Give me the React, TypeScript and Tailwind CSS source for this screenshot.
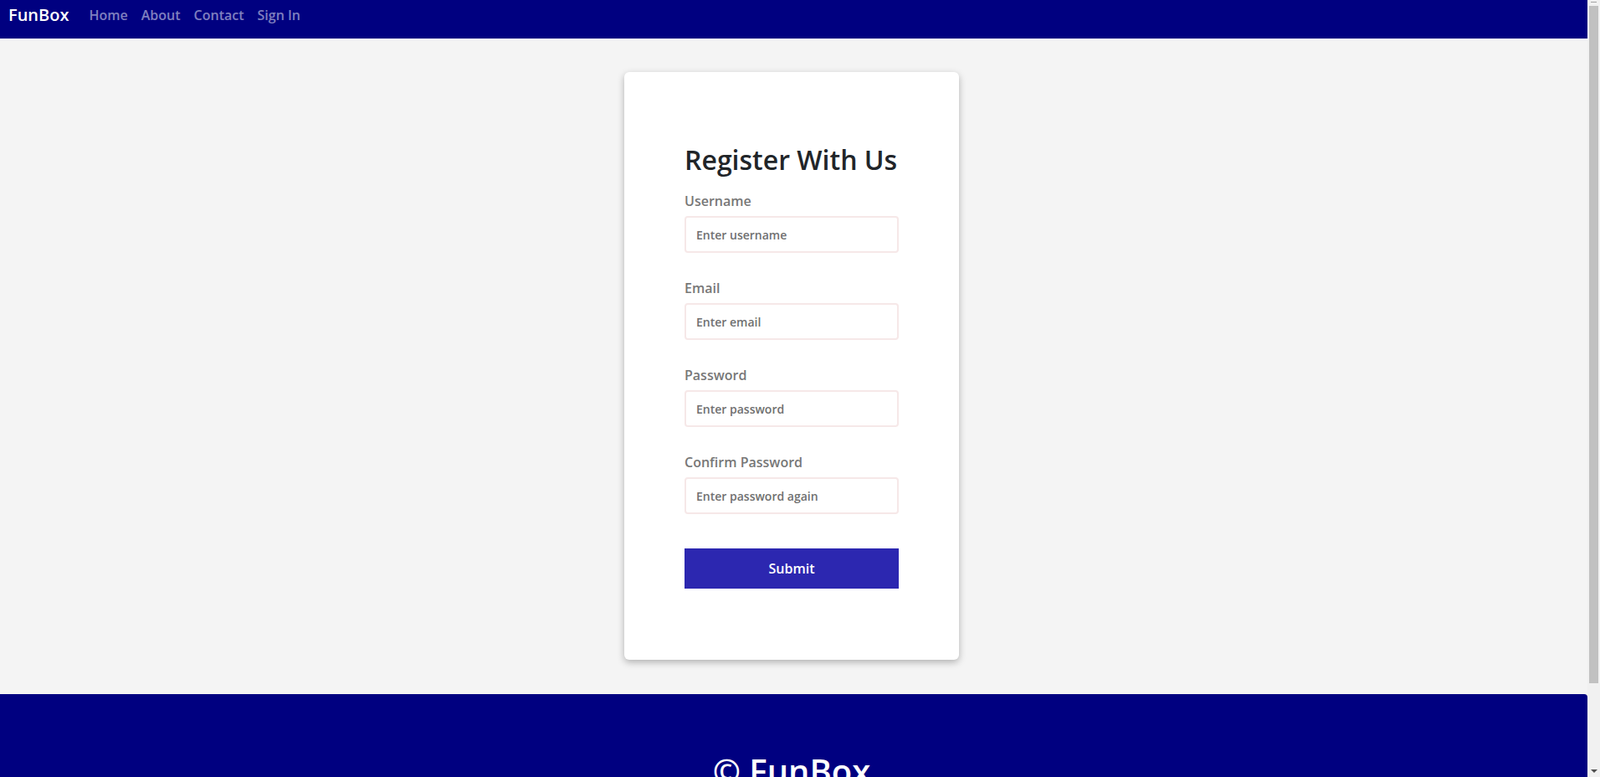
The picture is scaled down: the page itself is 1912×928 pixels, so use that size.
import { useState } from 'react';

const fields = [
  { id: 'username', label: 'Username', placeholder: 'Enter username', type: 'text' },
  { id: 'email', label: 'Email', placeholder: 'Enter email', type: 'email' },
  { id: 'password', label: 'Password', placeholder: 'Enter password', type: 'password' },
  { id: 'confirm', label: 'Confirm Password', placeholder: 'Enter password again', type: 'password' },
];

function FakeScrollbar() {
  // the reference was taken with the window scrollbar showing
  return (
    <div className="sticky top-0 h-screen w-[15px] shrink-0 bg-[#f1f1f1] flex flex-col items-center">
      <div className="h-[7px] w-full flex items-start justify-center">
        <div className="mt-[2px] w-[7px] h-[1px] bg-[#a3a3a3]" />
      </div>
      <div className="w-[11px] h-[809px] bg-[#c1c1c1]" />
      <div className="flex-1 w-full flex items-end justify-center pb-[5px]">
        <div className="w-0 h-0 border-l-[4px] border-r-[4px] border-t-[4px] border-l-transparent border-r-transparent border-t-[#505050]" />
      </div>
    </div>
  );
}

export default function App() {
  const [values, setValues] = useState<Record<string, string>>({});

  return (
    <div className="flex items-start bg-[#f4f4f4] font-['Open_Sans',sans-serif]">
      <div className="flex-1 min-w-0 flex flex-col">
        <nav className="h-[46px] bg-[#000080] flex items-start pt-[3px] pl-[10px] pr-3">
          <a href="#" className="text-white text-[20px] leading-[30px] font-semibold mr-4">FunBox</a>
          <ul className="flex items-center pt-[3px]">
            {['Home', 'About', 'Contact', 'Sign In'].map(l => (
              <li key={l}>
                <a href="#" className="block px-2 text-base leading-6 font-semibold text-white/50">{l}</a>
              </li>
            ))}
          </ul>
        </nav>

        <main className="flex justify-center pt-10 pb-[41px] pr-[5px]">
          <div className="w-[400px] bg-white rounded-md shadow-[0_3px_9px_rgba(0,0,0,0.28)] pt-[86px] px-[72px] pb-[85px]">
            <h2 className="text-[32px] leading-[38.4px] font-semibold text-[#212529] mb-[18px]">Register With Us</h2>
            <form onSubmit={e => e.preventDefault()}>
              {fields.map((f, i) => (
                <div key={f.id} className={i < fields.length - 1 ? 'mb-[30px]' : ''}>
                  <label htmlFor={f.id} className="block text-base leading-6 font-semibold text-[#777777] mb-[6px]">{f.label}</label>
                  <input
                    id={f.id}
                    type={f.type}
                    value={values[f.id] || ''}
                    onChange={e => setValues({ ...values, [f.id]: e.target.value })}
                    placeholder={f.placeholder}
                    className="block w-full h-[44px] px-3 border-2 border-[#f6e8e8] rounded-[4px] text-sm font-semibold text-[#555] placeholder:text-[#707070] outline-none"
                  />
                </div>
              ))}
              <button type="submit" className="mt-[41px] w-full h-12 bg-[#2c27b0] text-white text-base font-semibold">
                Submit
              </button>
            </form>
          </div>
        </main>

        <footer className="bg-[#000080] rounded-tr-[4px] pt-[68px] pb-16 pr-[5px] text-center">
          <p className="text-white text-[40px] leading-[48px] font-semibold">© FunBox</p>
        </footer>
      </div>
      <FakeScrollbar />
    </div>
  );
}
